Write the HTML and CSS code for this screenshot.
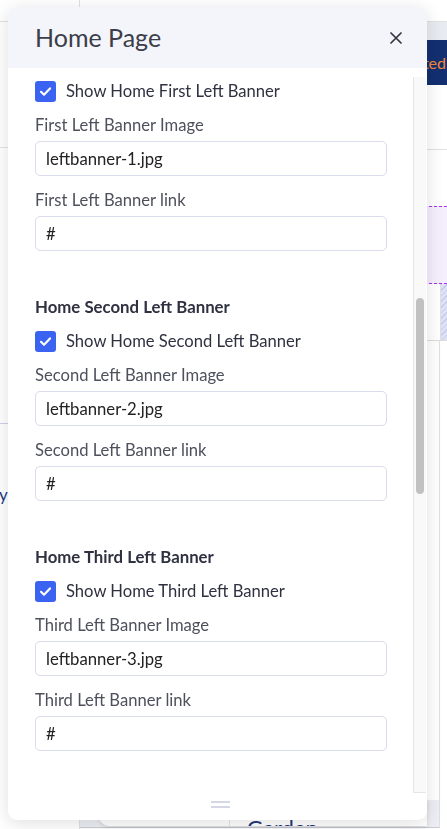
FILE: index.html
```html
<!DOCTYPE html>
<html lang="en">
<head>
<meta charset="utf-8">
<title>Home Page settings</title>
<link rel="stylesheet" href="styles.css">
</head>
<body>
<div class="page">
  <aside class="side">
    <div class="side-top"></div>
    <div class="side-sec1"></div>
    <div class="side-sec2"></div>
    <div class="side-item">Gallery</div>
  </aside>
  <main class="main">
    <div class="main-top"></div>
    <div class="subbar"></div>
    <div class="hero"><span class="hero-text">Get Started</span></div>
    <div class="row1"></div>
    <div class="row2"></div>
    <div class="drop"></div>
    <div class="grid">
      <div class="grid-main"></div>
      <div class="grid-side"></div>
    </div>
    <div class="filler">
      <div class="filler-main"></div>
    </div>
    <div class="shelf">
      <div class="shelf-card">
        <div class="shelf-col"></div>
        <div class="shelf-col2">Garden</div>
      </div>
    </div>
  </main>
</div>

<div class="modal">
  <div class="modal-header">
    <h2 class="modal-title">Home Page</h2>
    <button class="close-btn" aria-label="Close">
      <svg width="12" height="12" viewBox="0 0 12 12"><path d="M1 1L11 11M11 1L1 11" stroke="#34363f" stroke-width="1.7" stroke-linecap="round"/></svg>
    </button>
  </div>
  <div class="modal-body">
    <div class="content">
      <label class="check-row">
        <span class="checkbox"><svg width="21" height="21" viewBox="0 0 21 21"><path d="M6 10.8L9 13.7L15 7.4" fill="none" stroke="#fff" stroke-width="2.2" stroke-linecap="round" stroke-linejoin="round"/></svg></span>
        <span class="check-label">Show Home First Left Banner</span>
      </label>
      <div class="field">
        <div class="field-label">First Left Banner Image</div>
        <input class="input" type="text" value="leftbanner-1.jpg" readonly>
      </div>
      <div class="field">
        <div class="field-label">First Left Banner link</div>
        <input class="input" type="text" value="#" readonly>
      </div>

      <h3 class="section-title">Home Second Left Banner</h3>
      <label class="check-row">
        <span class="checkbox"><svg width="21" height="21" viewBox="0 0 21 21"><path d="M6 10.8L9 13.7L15 7.4" fill="none" stroke="#fff" stroke-width="2.2" stroke-linecap="round" stroke-linejoin="round"/></svg></span>
        <span class="check-label">Show Home Second Left Banner</span>
      </label>
      <div class="field">
        <div class="field-label">Second Left Banner Image</div>
        <input class="input" type="text" value="leftbanner-2.jpg" readonly>
      </div>
      <div class="field">
        <div class="field-label">Second Left Banner link</div>
        <input class="input" type="text" value="#" readonly>
      </div>

      <h3 class="section-title">Home Third Left Banner</h3>
      <label class="check-row">
        <span class="checkbox"><svg width="21" height="21" viewBox="0 0 21 21"><path d="M6 10.8L9 13.7L15 7.4" fill="none" stroke="#fff" stroke-width="2.2" stroke-linecap="round" stroke-linejoin="round"/></svg></span>
        <span class="check-label">Show Home Third Left Banner</span>
      </label>
      <div class="field">
        <div class="field-label">Third Left Banner Image</div>
        <input class="input" type="text" value="leftbanner-3.jpg" readonly>
      </div>
      <div class="field">
        <div class="field-label">Third Left Banner link</div>
        <input class="input" type="text" value="#" readonly>
      </div>

      <h3 class="section-title">Home Fourth Left Banner</h3>
    </div>
    <div class="scroll-track"><div class="scroll-thumb"></div></div>
  </div>
  <div class="modal-footer">
    <span class="drag-handle"></span>
  </div>
</div>
</body>
</html>
```
FILE: styles.css
```css
* { box-sizing: border-box; }
html, body { margin: 0; padding: 0; }
body {
  width: 447px;
  height: 829px;
  overflow: hidden;
  background: #ffffff;
  font-family: Lato, "Liberation Sans", sans-serif;
}

/* ---------- background page ---------- */
.page {
  display: flex;
  width: 447px;
  height: 829px;
}
.side {
  width: 80px;
  flex: none;
  border-right: 1px solid #e1e1e1;
  overflow: hidden;
}
.side-top { height: 22px; border-bottom: 1px solid #e0e0e0; }
.side-sec1 { height: 126px; border-bottom: 1px solid #e2e2e2; }
.side-sec2 { height: 276px; border-bottom: 1px solid #cdd0e4; }
.side-item {
  margin-top: 60px;
  margin-left: -45px;
  font-size: 17px;
  color: #1f3b86;
  white-space: nowrap;
}
.main {
  flex: 1;
  display: flex;
  flex-direction: column;
  min-width: 0;
}
.main-top { height: 22px; border-bottom: 1px solid #e0e0e0; }
.subbar { height: 18px; background: #e9ebf2; }
.hero {
  height: 45px;
  background: #132f6f;
  display: flex;
  align-items: center;
  justify-content: flex-end;
  padding-right: 1px;
}
.hero-text { color: #f5893a; font-size: 16px; }
.row1 { height: 65px; border-bottom: 1px solid #e2e2e2; }
.row2 { height: 56px; }
.drop {
  height: 78px;
  background: #f5eefc;
  border-top: 1px dashed #a633ee;
  border-bottom: 1px dashed #a633ee;
}
.grid {
  display: flex;
  height: 57px;
  border-bottom: 1px solid #dddddd;
}
.grid-main { flex: 1; border-right: 1px solid #e0e0e0; }
.grid-side {
  width: 6px;
  background-color: #dfe2f6;
  background-image: repeating-linear-gradient(135deg, #c8cce8 0 1px, transparent 1px 4px);
}
.filler { flex: 1; display: flex; }
.filler-main { width: 360px; border-right: 1px solid #e0e0e0; }
.shelf {
  height: 28px;
  width: 360px;
  background: #eceef3;
  border-bottom: 1px solid #c9cbd2;
  border-right: 1px solid #e0e0e0;
  padding-left: 18px;
  margin-bottom: 1px;
}
.shelf-card {
  height: 26px;
  width: 329px;
  background: #fff;
  border-radius: 0 0 0 12px;
  box-shadow: 0 1px 4px rgba(0,0,0,0.12);
  display: flex;
  overflow: hidden;
}
.shelf-col { width: 132px; border-right: 1px solid #e3e3e3; }
.shelf-col2 {
  padding-left: 17px;
  padding-top: 17px;
  font-size: 22px;
  line-height: 1;
  color: #1c3578;
}

/* ---------- modal ---------- */
.modal {
  position: fixed;
  left: 8px;
  top: 7px;
  width: 419px;
  height: 813px;
  background: #fff;
  border-radius: 9px;
  box-shadow: 0 3px 18px rgba(0,0,0,0.13);
  display: flex;
  flex-direction: column;
  overflow: hidden;
}
.modal-header {
  height: 61px;
  flex: none;
  background: #f4f5fa;
  display: flex;
  align-items: center;
  justify-content: space-between;
  padding: 0 24px 0 27px;
}
.modal-title {
  margin: 0;
  font-size: 25px;
  font-weight: 400;
  color: #3b3d49;
  line-height: 1;
}
.close-btn {
  border: 0;
  background: transparent;
  padding: 0;
  width: 14px;
  height: 14px;
  display: flex;
  align-items: center;
  justify-content: center;
}
.modal-body {
  flex: 1;
  display: flex;
  min-height: 0;
}
.content {
  flex: 1;
  overflow: hidden;
  padding: 11px 26px 0 27px;
}
.check-row {
  display: flex;
  align-items: center;
  height: 24px;
  gap: 10px;
}
.checkbox {
  width: 21px;
  height: 21px;
  border-radius: 3px;
  background: #3b63f2;
  display: flex;
  flex: none;
}
.check-label {
  font-size: 16.6px;
  color: #2f3140;
}
.field { margin-top: 10px; }
.field + .field { margin-top: 12px; }
.field-label {
  font-size: 16.6px;
  line-height: 24px;
  color: #4e505c;
  margin-bottom: 4px;
}
.input {
  display: block;
  width: 352px;
  height: 35px;
  border: 1px solid #d9dcea;
  border-radius: 5px;
  padding: 0 10px;
  font-family: Lato, "Liberation Sans", sans-serif;
  font-size: 16.7px;
  color: #222;
  background: #fff;
  outline: none;
}
.section-title {
  margin: 44px 0 10px;
  font-size: 16.8px;
  line-height: 24px;
  font-weight: 700;
  color: #2f3140;
}
.scroll-track {
  width: 13px;
  flex: none;
  margin: 9px 1px 0 0;
  background: #f9f9f9;
  border-left: 1px solid #e6e6e6;
  border-bottom: 1px solid #e6e6e6;
  padding: 221px 0 0 2px;
}
.scroll-thumb {
  width: 8px;
  height: 196px;
  border-radius: 4px;
  background: #c1c1c1;
}
.modal-footer {
  height: 27px;
  flex: none;
  display: flex;
  justify-content: center;
  padding: 8px 0 0 5px;
}
.drag-handle {
  width: 19px;
  height: 7px;
  border-top: 2px solid #d4d7e6;
  border-bottom: 2px solid #d4d7e6;
}
```
